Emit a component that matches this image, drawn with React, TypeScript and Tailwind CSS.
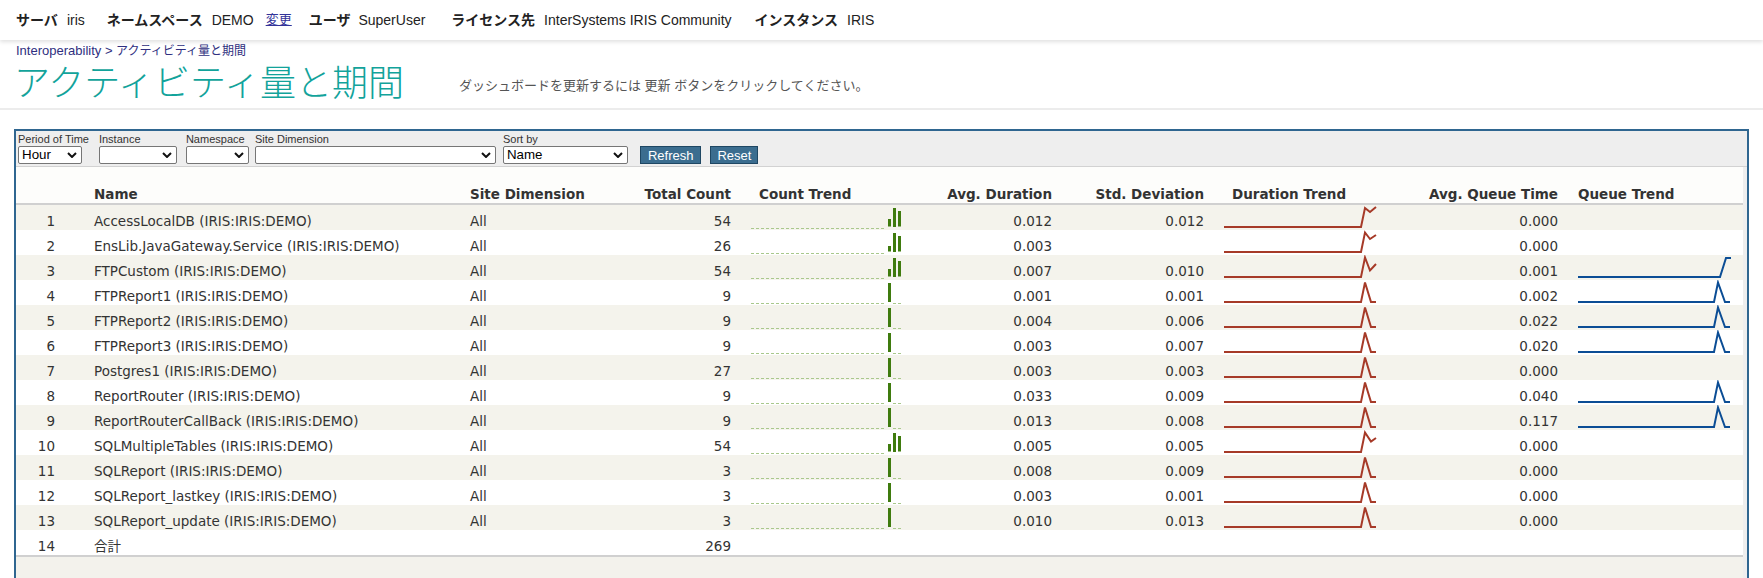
import React from "react";

type Row = {
  n: number;
  name: string;
  count: string;
  bars?: number[][];
  avg?: string;
  std?: string;
  dur?: string;
  q?: string;
  qt?: string;
};

const ZIG1 = "0,22 137,22 141,3 146,7 152,2";
const ZIG2 = "0,22 137,22 141,2.5 146,9 152,5";
const ZIG3 = "0,22 137,22 141,2.5 146,15.5 152,9";
const ZIG10 = "0,22 137,22 141,2.5 147,11.5 152,8";
const SPIKE = "0,22 137,22 141,2.5 147,22 152,22";
const QSPIKE = "0,22 136,22 140,2.5 147,22 152,22";
const QSTEP = "0,22 142,22 148,3 153,3";

const THREE = [
  [14, 21.5],
  [3, 22],
  [6, 21.5],
];
const ONE = [[3, 22]];

const rows: Row[] = [
  { n: 1, name: "AccessLocalDB (IRIS:IRIS:DEMO)", count: "54", bars: THREE, avg: "0.012", std: "0.012", dur: ZIG1, q: "0.000" },
  { n: 2, name: "EnsLib.JavaGateway.Service (IRIS:IRIS:DEMO)", count: "26", bars: [[16, 21.5], [3, 22], [6, 21.5]], avg: "0.003", std: "", dur: ZIG2, q: "0.000" },
  { n: 3, name: "FTPCustom (IRIS:IRIS:DEMO)", count: "54", bars: THREE, avg: "0.007", std: "0.010", dur: ZIG3, q: "0.001", qt: QSTEP },
  { n: 4, name: "FTPReport1 (IRIS:IRIS:DEMO)", count: "9", bars: ONE, avg: "0.001", std: "0.001", dur: SPIKE, q: "0.002", qt: QSPIKE },
  { n: 5, name: "FTPReport2 (IRIS:IRIS:DEMO)", count: "9", bars: ONE, avg: "0.004", std: "0.006", dur: SPIKE, q: "0.022", qt: QSPIKE },
  { n: 6, name: "FTPReport3 (IRIS:IRIS:DEMO)", count: "9", bars: ONE, avg: "0.003", std: "0.007", dur: SPIKE, q: "0.020", qt: QSPIKE },
  { n: 7, name: "Postgres1 (IRIS:IRIS:DEMO)", count: "27", bars: ONE, avg: "0.003", std: "0.003", dur: SPIKE, q: "0.000" },
  { n: 8, name: "ReportRouter (IRIS:IRIS:DEMO)", count: "9", bars: ONE, avg: "0.033", std: "0.009", dur: SPIKE, q: "0.040", qt: QSPIKE },
  { n: 9, name: "ReportRouterCallBack (IRIS:IRIS:DEMO)", count: "9", bars: ONE, avg: "0.013", std: "0.008", dur: SPIKE, q: "0.117", qt: QSPIKE },
  { n: 10, name: "SQLMultipleTables (IRIS:IRIS:DEMO)", count: "54", bars: THREE, avg: "0.005", std: "0.005", dur: ZIG10, q: "0.000" },
  { n: 11, name: "SQLReport (IRIS:IRIS:DEMO)", count: "3", bars: ONE, avg: "0.008", std: "0.009", dur: SPIKE, q: "0.000" },
  { n: 12, name: "SQLReport_lastkey (IRIS:IRIS:DEMO)", count: "3", bars: ONE, avg: "0.003", std: "0.001", dur: SPIKE, q: "0.000" },
  { n: 13, name: "SQLReport_update (IRIS:IRIS:DEMO)", count: "3", bars: ONE, avg: "0.010", std: "0.013", dur: SPIKE, q: "0.000" },
  { n: 14, name: "合計", count: "269" },
];

const GRID =
  "grid grid-cols-[44px_410px_130px_131px_171px_150px_152px_172px_182px_1fr]";

function CountTrend({ bars }: { bars: number[][] }) {
  const single = bars.length === 1;
  return (
    <svg width={152} height={25} className="ml-[19px] block">
      <line x1={1} y1={23.5} x2={136} y2={23.5} stroke="#a9c88c" strokeWidth={1} strokeDasharray="3 2" />
      {single && (
        <line x1={143} y1={23.5} x2={152} y2={23.5} stroke="#a9c88c" strokeWidth={1} strokeDasharray="3 2" />
      )}
      {bars.map(([t, b], i) => (
        <rect key={i} x={138 + i * 5} y={t} width={3} height={b - t} fill="#3f7b0e" />
      ))}
    </svg>
  );
}

function Trend({ points, color }: { points: string; color: string }) {
  return (
    <svg width={156} height={25} className="ml-[20px] block">
      <polyline points={points} fill="none" stroke={color} strokeWidth={2} strokeLinejoin="miter" />
    </svg>
  );
}

function Select({ w, value }: { w: string; value?: string }) {
  return (
    <div
      className={`${w} flex h-[18px] items-center justify-between rounded-[2px] border border-[#767676] bg-white pl-[3px] pr-[4px] text-[13.33px] leading-none text-black`}
    >
      <span>{value ?? ""}</span>
      <svg width={10} height={6} viewBox="0 0 10 6">
        <polyline points="1,1 5,5 9,1" fill="none" stroke="#111" strokeWidth={2} />
      </svg>
    </div>
  );
}

function Filter({ label, ml, children }: { label: string; ml: string; children: React.ReactNode }) {
  return (
    <div className={`${ml} flex flex-col`}>
      <span className="text-[11px] leading-[13px] text-[#333]">{label}</span>
      {children}
    </div>
  );
}

export default function App() {
  return (
    <div className="min-h-[578px] bg-white font-['Liberation_Sans','Noto_Sans_CJK_JP',sans-serif] text-[#222]">
      {/* top info bar */}
      <div className="flex h-[40px] items-center pl-[16px] text-[14px] shadow-[0_2px_4px_rgba(0,0,0,0.12)]">
        <span className="font-bold">サーバ</span>
        <span className="ml-[9px]">iris</span>
        <span className="ml-[22px] font-bold">ネームスペース</span>
        <span className="ml-[9px]">DEMO</span>
        <span className="ml-[12px] text-[13px] text-[#333399] underline">変更</span>
        <span className="ml-[17px] font-bold">ユーザ</span>
        <span className="ml-[8px]">SuperUser</span>
        <span className="ml-[26px] font-bold">ライセンス先</span>
        <span className="ml-[9px]">InterSystems IRIS Community</span>
        <span className="ml-[23px] font-bold">インスタンス</span>
        <span className="ml-[9px]">IRIS</span>
      </div>

      {/* breadcrumb + title */}
      <div className="pl-[16px] pt-[4px] text-[13px] leading-[14px] text-[#2f2f80]">
        Interoperability &gt; <span className="text-[12px]">アクティビティ量と期間</span>
      </div>
      <div className="mt-[6px] flex items-start pl-[14px]">
        <div className="w-[445px] text-[36px] font-light leading-[40px] text-[#12a39b]">
          アクティビティ量と期間
        </div>
        <div className="pt-[14px] text-[13px] leading-[16px] text-[#555]">
          ダッシュボードを更新するには 更新 ボタンをクリックしてください。
        </div>
      </div>
      <div className="mt-[4px] h-[2px] bg-[#ececec]" />

      {/* dashboard panel */}
      <div className="mx-[14px] mt-[19px] border-2 border-b-0 border-[#2f6690] bg-[#eeeeee]">
        <div className="flex items-start border-b border-[#d2d2d2] pb-[2px] pl-[2px] pt-[2px]">
          <Filter label="Period of Time" ml="ml-0">
            <Select w="w-[64px]" value="Hour" />
          </Filter>
          <Filter label="Instance" ml="ml-[10px]">
            <Select w="w-[78px]" />
          </Filter>
          <Filter label="Namespace" ml="ml-[9px]">
            <Select w="w-[63px]" />
          </Filter>
          <Filter label="Site Dimension" ml="ml-[6px]">
            <Select w="w-[241px]" />
          </Filter>
          <Filter label="Sort by" ml="ml-[7px]">
            <Select w="w-[125px]" value="Name" />
          </Filter>
          <button className="ml-[12px] mt-[13px] h-[18px] border border-[#1f4763] bg-[#3b6d8f] px-[7px] text-[13px] leading-none text-white">
            Refresh
          </button>
          <button className="ml-[9px] mt-[13px] h-[18px] border border-[#1f4763] bg-[#3b6d8f] px-[6px] text-[13px] leading-none text-white">
            Reset
          </button>
        </div>

        {/* table */}
        <div className="mr-[4px] bg-[#fdfdfb] font-['DejaVu_Sans','Noto_Sans_CJK_JP',sans-serif] text-[#333]">
          <div className={`${GRID} h-[38px] items-end border-b-2 border-[#d0d0d0] pb-[1px] text-[13.5px] font-bold leading-[16px]`}>
            <div />
            <div className="pl-[34px]">Name</div>
            <div>Site Dimension</div>
            <div className="text-right">Total Count</div>
            <div className="pl-[28px]">Count Trend</div>
            <div className="text-right">Avg. Duration</div>
            <div className="text-right">Std. Deviation</div>
            <div className="pl-[28px]">Duration Trend</div>
            <div className="text-right">Avg. Queue Time</div>
            <div className="pl-[20px]">Queue Trend</div>
          </div>
          {rows.map((r) => (
            <div
              key={r.n}
              className={`${GRID} h-[25px] items-end text-[13.5px] leading-[16px] ${r.n % 2 === 1 ? "bg-[#f4f3ec]" : "bg-white"}`}
            >
              <div className="pb-[1px] pr-[5px] text-right">{r.n}</div>
              <div className="pb-[1px] pl-[34px]">{r.name}</div>
              <div className="pb-[1px]">{r.n < 14 ? "All" : ""}</div>
              <div className="pb-[1px] text-right">{r.count}</div>
              <div className="self-stretch">{r.bars && <CountTrend bars={r.bars} />}</div>
              <div className="pb-[1px] text-right">{r.avg}</div>
              <div className="pb-[1px] text-right">{r.std}</div>
              <div className="self-stretch">{r.dur && <Trend points={r.dur} color="#a63a28" />}</div>
              <div className="pb-[1px] text-right">{r.q}</div>
              <div className="self-stretch">{r.qt && <Trend points={r.qt} color="#0b4d95" />}</div>
            </div>
          ))}
          <div className="h-[60px] border-t-2 border-[#d0d0d0] bg-[#f3f2ec]" />
        </div>
      </div>
    </div>
  );
}
